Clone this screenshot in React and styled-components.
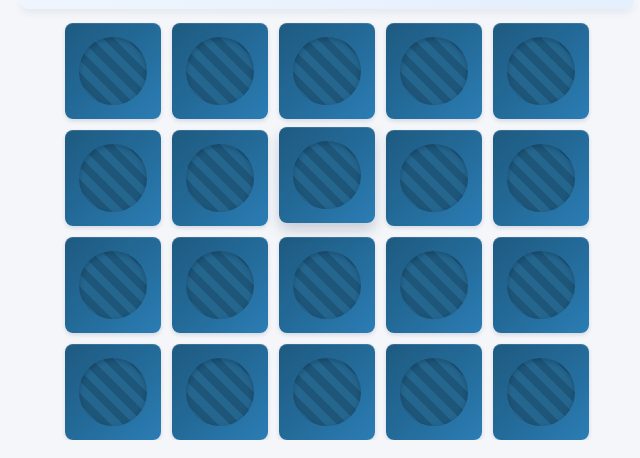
import React from 'react';
import styled, { createGlobalStyle, css } from 'styled-components';

const GlobalStyle = createGlobalStyle`
  body {
    margin: 0;
    background: #f4f6fa;
    font-family: "Inter", "Liberation Sans", sans-serif;
  }
`;

const Page = styled.div`
  width: 614px;
  margin-left: 20px;
  display: flex;
  flex-direction: column;
  gap: 14px;
`;

const Header = styled.div`
  height: 9px;
  border-radius: 0 0 12px 12px;
  background: linear-gradient(90deg, #eef5fe, #e4effd);
  box-shadow: 0 3px 8px rgba(40, 60, 90, 0.09);
`;

const Board = styled.div`
  display: grid;
  grid-template-columns: repeat(5, 96px);
  grid-auto-rows: 96px;
  gap: 11px;
  justify-content: center;
`;

const Card = styled.div`
  border-radius: 8px;
  background: linear-gradient(135deg, #1e5a80 0%, #246c9b 55%, #2b7db5 100%);
  box-shadow: 0 2px 4px rgba(20, 40, 70, 0.14), inset 0 1px 0 rgba(255, 255, 255, 0.12);
  display: flex;
  align-items: center;
  justify-content: center;
  ${(p) =>
    p.$raised &&
    css`
      transform: translateY(-3px);
      box-shadow: 0 7px 14px rgba(20, 40, 70, 0.2), inset 0 1px 0 rgba(255, 255, 255, 0.12);
    `}
`;

const Disc = styled.div`
  width: 68px;
  height: 68px;
  border-radius: 50%;
  background: repeating-linear-gradient(
    45deg,
    #1d5679 0px,
    #1d5679 8px,
    #25668f 8px,
    #25668f 16px
  );
  box-shadow: inset 0 2px 5px rgba(0, 20, 40, 0.28);
`;

const cards = Array.from({ length: 20 }, (_, i) => i);

const App = () => {
  return (
    <>
      <GlobalStyle />
      <Page>
        <Header />
        <Board>
          {cards.map((i) => (
            <Card key={i} $raised={i === 7}>
              <Disc />
            </Card>
          ))}
        </Board>
      </Page>
    </>
  );
};

export default App;
